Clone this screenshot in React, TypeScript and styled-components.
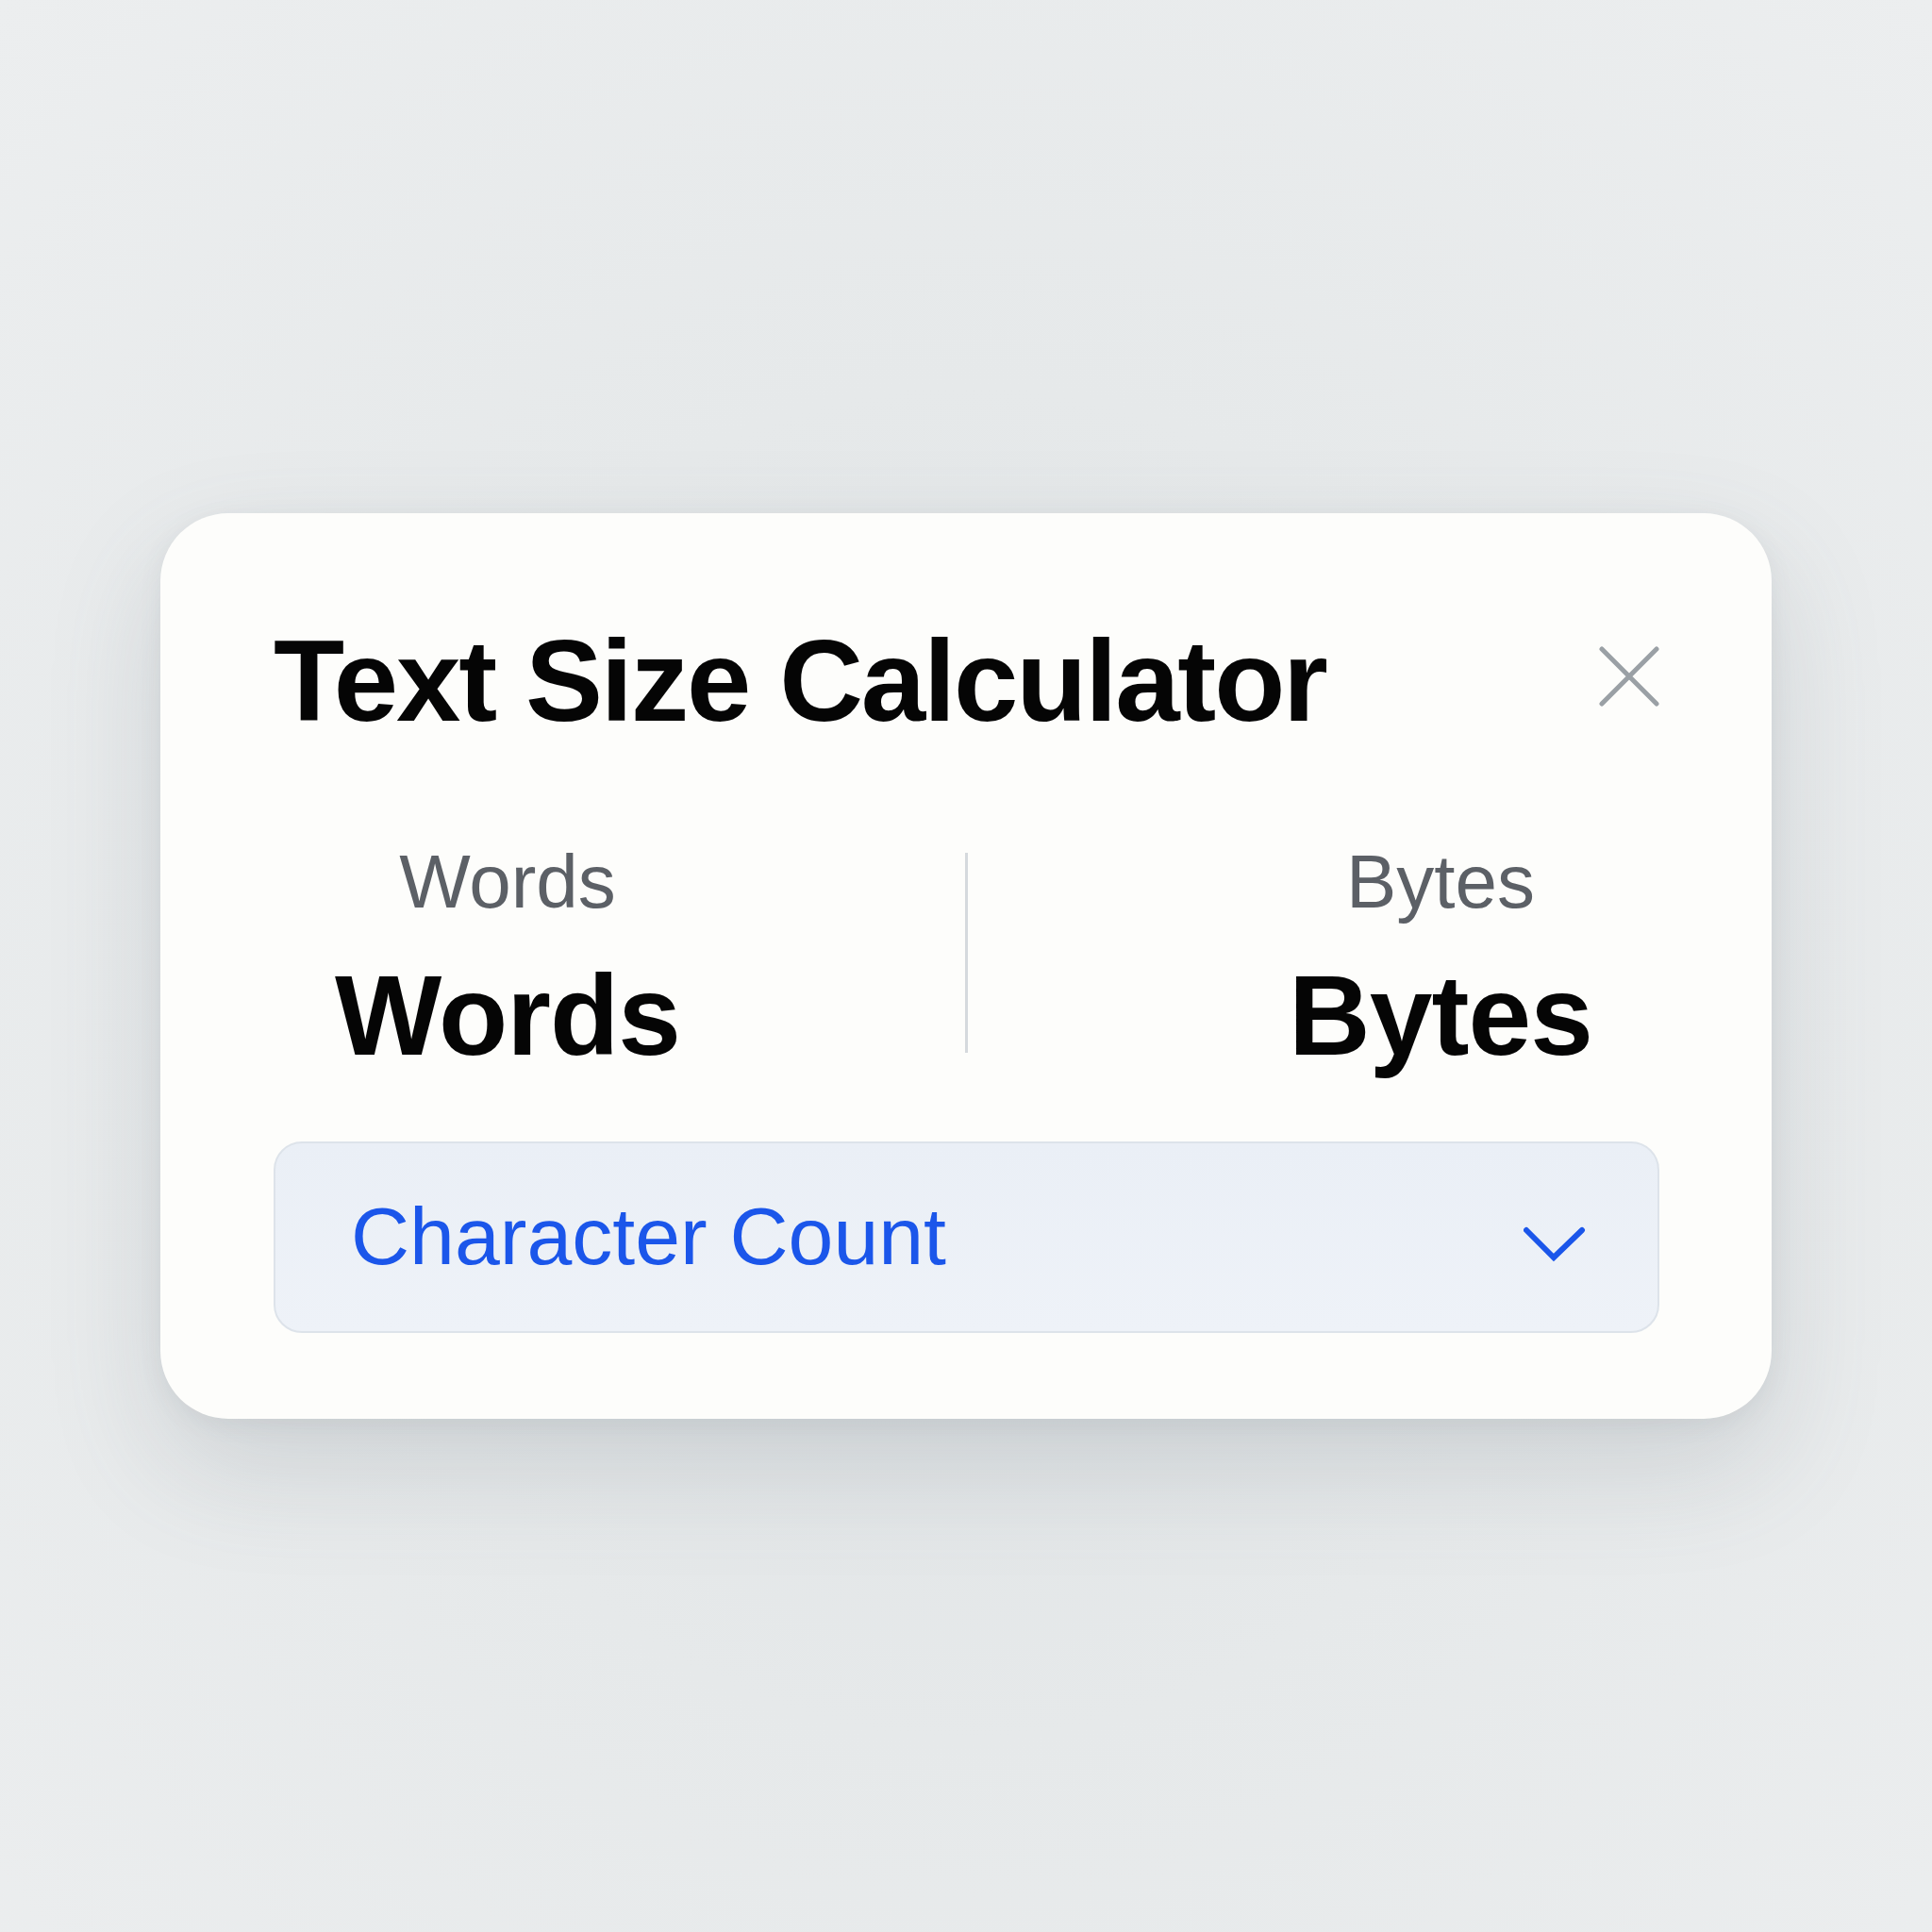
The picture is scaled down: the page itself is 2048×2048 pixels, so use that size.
import styled, { createGlobalStyle } from "styled-components";

const Global = createGlobalStyle`
  html, body {
    margin: 0;
    padding: 0;
  }
  body {
    font-family: "Liberation Sans", Arial, sans-serif;
    background: radial-gradient(ellipse at 50% 55%, #dfe3e5 0%, #e6e9ea 45%, #eceeef 100%);
    min-height: 100vh;
  }
`;

const Page = styled.div`
  width: 2048px;
  height: 2048px;
  display: flex;
  align-items: center;
  justify-content: center;
`;

const Card = styled.div`
  width: 1708px;
  box-sizing: border-box;
  padding: 116px 119px 91px 120px;
  background: #fdfdfb;
  border-radius: 72px;
  box-shadow: 0 50px 120px rgba(90, 100, 110, 0.18), 0 6px 24px rgba(90, 100, 110, 0.08);
  display: flex;
  flex-direction: column;
`;

const Header = styled.div`
  display: flex;
  align-items: center;
  justify-content: space-between;
`;

const Title = styled.h1`
  margin: 0;
  font-size: 123px;
  line-height: 1;
  font-weight: 700;
  letter-spacing: -2.2px;
  color: #050505;
`;

const CloseButton = styled.button`
  width: 64px;
  height: 64px;
  padding: 0;
  border: none;
  background: none;
  display: flex;
  align-items: center;
  justify-content: center;
  margin-top: -10px;
`;

const Stats = styled.div`
  display: grid;
  grid-template-columns: 1fr auto 1fr;
  margin-top: 112px;
`;

const Stat = styled.div<{ $side: "left" | "right" }>`
  display: flex;
  flex-direction: column;
  align-items: center;
  gap: 41px;
  padding-right: ${(p) => (p.$side === "left" ? "237px" : "0")};
  padding-left: ${(p) => (p.$side === "right" ? "269px" : "0")};
`;

const Label = styled.div`
  font-size: 80px;
  line-height: 1;
  color: #5c6066;
`;

const Value = styled.div`
  font-size: 120px;
  line-height: 1;
  font-weight: 700;
  letter-spacing: -1px;
  color: #050505;
`;

const Divider = styled.div`
  width: 3px;
  background: #d5d9dd;
  margin: 9px 0 20px;
`;

const Select = styled.div`
  margin-top: 74px;
  height: 203px;
  box-sizing: border-box;
  border: 2px solid #dde3ea;
  border-radius: 30px;
  background: linear-gradient(180deg, #eaeff6 0%, #eef2f8 100%);
  display: flex;
  align-items: center;
  justify-content: space-between;
  padding: 0 76px 0 80px;
`;

const SelectText = styled.span`
  font-size: 86px;
  line-height: 1;
  color: #1b56ea;
  margin-top: -4px;
`;

const Chevron = styled.svg`
  margin-top: 14px;
`;

export default function App() {
  return (
    <>
      <Global />
      <Page>
        <Card>
          <Header>
            <Title>Text Size Calculator</Title>
            <CloseButton aria-label="Close">
              <svg width="64" height="64" viewBox="0 0 64 64">
                <path
                  d="M3 3 L61 61 M61 3 L3 61"
                  stroke="#9aa0a5"
                  strokeWidth="5"
                  strokeLinecap="round"
                />
              </svg>
            </CloseButton>
          </Header>
          <Stats>
            <Stat $side="left">
              <Label>Words</Label>
              <Value>Words</Value>
            </Stat>
            <Divider />
            <Stat $side="right">
              <Label>Bytes</Label>
              <Value>Bytes</Value>
            </Stat>
          </Stats>
          <Select>
            <SelectText>Character Count</SelectText>
            <Chevron width="66" height="38" viewBox="0 0 66 38">
              <path
                d="M3 4 L32 33 L62 4"
                fill="none"
                stroke="#1b56ea"
                strokeWidth="6"
                strokeLinecap="round"
                strokeLinejoin="miter"
              />
            </Chevron>
          </Select>
        </Card>
      </Page>
    </>
  );
}
